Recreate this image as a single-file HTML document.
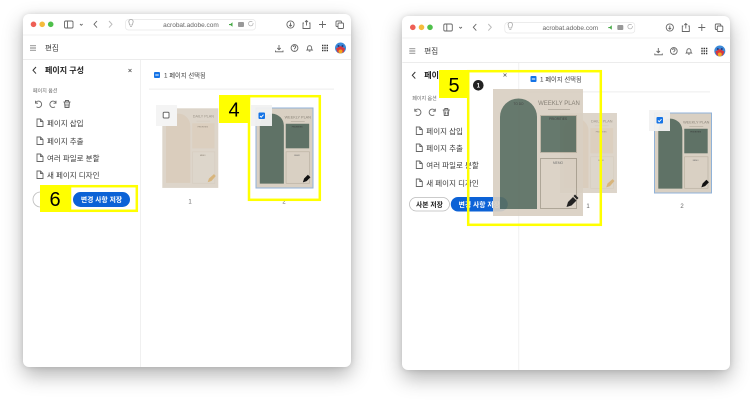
<!DOCTYPE html>
<html lang="ko"><head><meta charset="utf-8"><title>페이지 구성</title>
<style>
html,body{margin:0;padding:0;background:#fff;width:750px;height:402px;overflow:hidden}
.win{position:absolute;background:#fff;border-radius:6px;box-shadow:0 8px 20px rgba(0,0,0,.3),0 0 6px rgba(0,0,0,.12)}
svg{position:absolute;left:0;top:0;filter:blur(.35px)}
text{font-family:"Liberation Sans","Noto Sans CJK KR",sans-serif;fill:#3a3a3a}
.i{fill:none;stroke:#666;stroke-width:.9}
</style></head><body>
<div class="win" style="left:23px;top:13.500px;width:328px;height:353.500px"></div>
<div class="win" style="left:402px;top:16px;width:328px;height:354px"></div>
<svg width="750" height="402" viewBox="0 0 750 402" xmlns="http://www.w3.org/2000/svg">
<defs>
<g id="tb">
<circle cx="33.500" cy="24.300" r="2.800" fill="#ee5f55"/><circle cx="42.200" cy="24.300" r="2.800" fill="#f5bb3c"/><circle cx="50.700" cy="24.300" r="2.800" fill="#4fc04b"/>
<rect x="64.500" y="21" width="8.500" height="7" rx="1.300" class="i"/><path d="M67.500 21v7" class="i"/><path d="M80 24l1.300 1.300 1.300-1.300" class="i"/>
<path d="M97 21l-3 3.300 3 3.300" class="i" stroke-width="1.100"/><path d="M109 21l3 3.300-3 3.300" fill="none" stroke="#bbb"/>
<rect x="125.500" y="19.500" width="130" height="10.500" rx="3" fill="#fff" stroke="#e6e6e6" stroke-width=".7"/>
<path d="M129 22.500a2.200 2.200 0 1 1 4 0l-.7 2.500h-2.600zM130 26.500h2" fill="none" stroke="#aaa" stroke-width=".8"/>
<path d="M229 24h1.500l2-1.700v4.500l-2-1.700h-1.500z" fill="#45a845"/>
<rect x="238" y="22" width="6" height="5" rx="1" fill="#999"/>
<path d="M253 23a2.300 2.300 0 1 1-.6-1" fill="none" stroke="#aaa" stroke-width=".7"/>
<circle cx="290.500" cy="24.500" r="3.600" class="i"/><path d="M290.500 22.500v3.500M289.200 25l1.300 1.300 1.300-1.300" class="i" stroke-width=".6"/>
<path d="M304 23h-1v5.500h7V23h-1M306.500 25.500V20.500M305 22l1.500-1.500L308 22" class="i"/>
<path d="M322.500 21v7M319 24.500h7" class="i"/>
<rect x="336" y="21" width="5.500" height="5.500" rx="1" class="i"/><rect x="338" y="23" width="5.500" height="5.500" rx="1" fill="#fff" stroke="#666" stroke-width=".9"/>
<path d="M30 45.800h6M30 48h6M30 50.200h6" fill="none" stroke="#555" stroke-width=".7"/>
<path d="M279 45v4.500M277.300 48l1.700 1.700 1.700-1.700M275.500 50.500v1.300h7.500v-1.300" class="i"/>
<circle cx="294.500" cy="48" r="3.400" class="i"/><path d="M293.300 47a1.200 1.200 0 1 1 1.700 1.100l-.5.700v.5M294.500 50.300v.3" class="i" stroke-width=".6"/>
<path d="M307 50c.6-.6.6-1 .6-2.300a2 2 0 0 1 4 0c0 1.300 0 1.700.6 2.300zM308.800 51.200h1.600" class="i"/>
<path d="M322 45.500h1.400m.9 0h1.400m.9 0h1.400M322 48h1.400m.9 0h1.400m.9 0h1.400M322 50.500h1.400m.9 0h1.400m.9 0h1.400" fill="none" stroke="#333" stroke-width="1.400"/>
<circle cx="340.500" cy="48" r="5.500" fill="#3b8ad9"/><path d="M336 48.500l4.500-2.500 4.500 2.500-1.500 4h-6z" fill="#d8383f"/><circle cx="340.500" cy="51.500" r="2" fill="#f4a51f"/><circle cx="338.500" cy="46" r="1" fill="#27367c"/><circle cx="342.500" cy="46" r="1" fill="#27367c"/>
</g>
<g id="tools">
<path d="M35.500 103a3.200 3.200 0 1 1 1 3.800M35.500 100.700v2.500h2.500" class="i"/>
<path d="M56 103a3.200 3.200 0 1 0-1 3.800M56 100.700v2.500h-2.500" class="i"/>
<path d="M63.500 102h7M65.500 102v-1.500h3V102M64.500 102l.5 5.500h4l.5-5.500M66 103.500v3M68 103.500v3" class="i" stroke-width=".8"/>
</g>
<path id="doc" d="M0 0h3.500l2.500 2.500V7.500H0zM3.500 0v2.500H6" fill="none" stroke="#666" stroke-width=".9"/>
</defs>

<!-- LEFT WINDOW -->
<path d="M23 35h328" stroke="#ececec" stroke-width=".8"/>
<path d="M23 59.500h328" stroke="#e6e6e6" stroke-width=".8"/>
<path d="M140.500 60v307" stroke="#ededed" stroke-width=".8"/>
<use href="#tb"/>
<text x="191" y="27" font-size="6.500" text-anchor="middle" style="fill:#666">acrobat.adobe.com</text>
<text x="45" y="50.500" font-size="7.500">편집</text>
<path d="M36 67l-3 3.300 3 3.300" fill="none" stroke="#333" stroke-width="1"/>
<text x="45" y="73" font-size="8" font-weight="700" style="fill:#222">페이지 구성</text>
<path d="M128.500 69l3 3M131.500 69l-3 3" stroke="#555" stroke-width=".8"/>
<text x="33" y="92.500" font-size="5" style="fill:#666">페이지 옵션</text>
<use href="#tools"/>
<use href="#doc" x="37" y="119"/><text x="47" y="126" font-size="7.500">페이지 삽입</text>
<use href="#doc" x="37" y="137"/><text x="47" y="144" font-size="7.500">페이지 추출</text>
<use href="#doc" x="37" y="154"/><text x="47" y="161" font-size="7.500">여러 파일로 분할</text>
<use href="#doc" x="37" y="171"/><text x="47" y="178" font-size="7.500">새 페이지 디자인</text>
<rect x="33" y="192" width="30" height="15" rx="7.500" fill="#fff" stroke="#bbb" stroke-width=".8"/>
<rect x="149" y="88.700" width="185" height=".8" fill="#e8e8e8"/>
<rect x="154" y="72" width="6" height="6" rx="1" fill="#1473e6"/><rect x="155.300" y="74.500" width="3.400" height="1" fill="#fff"/>
<text x="164" y="77.500" font-size="6.300">1 페이지 선택됨</text>

<!-- daily thumb L -->
<g transform="translate(162.300 108.300) scale(.622 .627)">
<rect width="90" height="127" fill="#ddd5ca"/>
<path d="M6 119V28a18.500 18.500 0 0 1 39 0v91z" fill="#dacdbd"/>
<text x="66" y="15" font-size="6" text-anchor="middle" style="fill:#9c9488">DAILY PLAN</text>
<rect x="55" y="20" width="22" height=".8" fill="#d2c9bc"/>
<rect x="48" y="24" width="36" height="40" fill="#dccfbf"/>
<text x="65" y="31" font-size="3" text-anchor="middle" style="fill:#887e70">PRIORITIES</text>
<rect x="48.500" y="69.500" width="36" height="50" fill="#ddd6cb" stroke="#d5ccbf"/>
<text x="65" y="76" font-size="3" text-anchor="middle" style="fill:#887e70">MEMO</text>
<path d="M73 118l2-6 8-7 3 3-7 8z" fill="#d8b57c"/>
</g>
<rect x="156" y="105" width="21" height="21" fill="#f4f4f4"/>
<rect x="163.200" y="112.200" width="5.800" height="5.800" rx="1" fill="#fff" stroke="#666" stroke-width="1"/>
<text x="190" y="203.500" font-size="6" text-anchor="middle" style="fill:#666">1</text>

<!-- weekly thumb L -->
<g transform="translate(256 108) scale(.633 .63)">
<rect width="90" height="127" fill="#d9d0c3"/>
<path d="M6 120V28a19 19 0 0 1 38 0v92z" fill="#5f7266"/>
<text x="66" y="17" font-size="6" text-anchor="middle" style="fill:#8a8378">WEEKLY PLAN</text>
<rect x="55" y="21" width="22" height=".8" fill="#a9a194"/>
<rect x="47" y="25" width="37" height="39" fill="#5f7266"/>
<text x="65" y="31" font-size="3" text-anchor="middle" style="fill:#333">PRIORITIES</text>
<rect x="47.500" y="69.500" width="37" height="50" fill="#d9d0c3" stroke="#b8b0a0"/>
<text x="65" y="76" font-size="3" text-anchor="middle" style="fill:#666">MEMO</text>
<path d="M74 118l2-6 6-6 4 4-6 6z" fill="#111"/>
</g>
<rect x="256" y="108" width="57" height="80" fill="none" stroke="#90b2d8" stroke-width="1"/>
<rect x="251" y="105" width="21" height="21" fill="#f1f1f1" fill-opacity=".95"/>
<rect x="258.500" y="112.500" width="6.500" height="6.500" rx="1" fill="#1473e6"/><path d="M260 116l1.200 1.200 2.300-2.500" fill="none" stroke="#fff" stroke-width=".9"/>
<text x="284" y="203.500" font-size="6" text-anchor="middle" style="fill:#666">2</text>

<!-- annotation 4 -->
<rect x="249" y="96.200" width="70.800" height="103.600" fill="none" stroke="#ffff00" stroke-width="2.500"/>
<rect x="219" y="95" width="30" height="28" fill="#ffff00"/>
<text x="234" y="116.500" font-size="20" text-anchor="middle" style="fill:#000">4</text>
<!-- annotation 6 -->
<rect x="70" y="186.200" width="66.800" height="24.600" fill="#fff" stroke="#ffff00" stroke-width="2.500"/>
<rect x="40" y="185" width="30" height="27" fill="#ffff00"/>
<text x="55" y="206" font-size="20" text-anchor="middle" style="fill:#000">6</text>
<rect x="73" y="192" width="57" height="15" rx="7.500" fill="#0c62d6"/>
<text x="101.500" y="202" font-size="6.800" font-weight="700" text-anchor="middle" style="fill:#fff">변경 사항 저장</text>

<!-- RIGHT WINDOW -->
<g transform="translate(379.300 3)">
<path d="M23 35h328" stroke="#ececec" stroke-width=".8"/>
<path d="M23 59.500h328" stroke="#e6e6e6" stroke-width=".8"/>
<path d="M139.500 60v307" stroke="#ededed" stroke-width=".8"/>
<use href="#tb"/>
<text x="191" y="27" font-size="6.500" text-anchor="middle" style="fill:#666">acrobat.adobe.com</text>
<text x="45" y="50.500" font-size="7.500">편집</text>
<path d="M36 69l-3 3.300 3 3.300" fill="none" stroke="#333" stroke-width="1"/>
<text x="45" y="75" font-size="8" font-weight="700" style="fill:#222">페이지 구성</text>
<text x="33" y="97" font-size="5" style="fill:#666">페이지 옵션</text>
<g transform="translate(0 5)"><use href="#tools"/></g>
<use href="#doc" x="37" y="124"/><text x="47" y="131" font-size="7.500">페이지 삽입</text>
<use href="#doc" x="37" y="141"/><text x="47" y="148" font-size="7.500">페이지 추출</text>
<use href="#doc" x="37" y="158"/><text x="47" y="165" font-size="7.500">여러 파일로 분할</text>
<use href="#doc" x="37" y="176"/><text x="47" y="183" font-size="7.500">새 페이지 디자인</text>
<rect x="30.200" y="194.500" width="40" height="13.500" rx="6.750" fill="#fff" stroke="#bbb" stroke-width=".8"/>
<text x="50.200" y="204" font-size="6.800" font-weight="700" text-anchor="middle" style="fill:#222">사본 저장</text>
<rect x="71.500" y="194" width="57" height="14.500" rx="7.250" fill="#0c62d6"/>
<text x="100" y="204" font-size="6.800" font-weight="700" text-anchor="middle" style="fill:#fff">변경 사항 저장</text>
</g>
<rect x="528" y="91.500" width="182" height=".8" fill="#e8e8e8"/>
<rect x="530.500" y="76" width="6" height="6" rx="1" fill="#1473e6"/><rect x="531.800" y="78.500" width="3.400" height="1" fill="#fff"/>
<text x="540" y="81.500" font-size="6.300">1 페이지 선택됨</text>

<g transform="translate(560 113) scale(.633 .63)">
<rect width="90" height="127" fill="#ddd5ca"/>
<path d="M6 119V28a18.500 18.500 0 0 1 39 0v91z" fill="#dacdbd"/>
<text x="66" y="15" font-size="6" text-anchor="middle" style="fill:#9c9488">DAILY PLAN</text>
<rect x="55" y="20" width="22" height=".8" fill="#d2c9bc"/>
<rect x="48" y="24" width="36" height="40" fill="#dccfbf"/>
<text x="65" y="31" font-size="3" text-anchor="middle" style="fill:#887e70">PRIORITIES</text>
<rect x="48.500" y="69.500" width="36" height="50" fill="#ddd6cb" stroke="#d5ccbf"/>
<text x="65" y="76" font-size="3" text-anchor="middle" style="fill:#887e70">MEMO</text>
<path d="M73 118l2-6 8-7 3 3-7 8z" fill="#d8b57c"/>
</g>
<text x="588" y="208" font-size="6" text-anchor="middle" style="fill:#666">1</text>

<g transform="translate(654.500 113) scale(.633 .63)">
<rect width="90" height="127" fill="#d9d0c3"/>
<path d="M6 120V28a19 19 0 0 1 38 0v92z" fill="#5f7266"/>
<text x="66" y="17" font-size="6" text-anchor="middle" style="fill:#8a8378">WEEKLY PLAN</text>
<rect x="55" y="21" width="22" height=".8" fill="#a9a194"/>
<rect x="47" y="25" width="37" height="39" fill="#5f7266"/>
<text x="65" y="31" font-size="3" text-anchor="middle" style="fill:#333">PRIORITIES</text>
<rect x="47.500" y="69.500" width="37" height="50" fill="#d9d0c3" stroke="#b8b0a0"/>
<text x="65" y="76" font-size="3" text-anchor="middle" style="fill:#666">MEMO</text>
<path d="M74 118l2-6 6-6 4 4-6 6z" fill="#111"/>
</g>
<rect x="654.500" y="113" width="57" height="80" fill="none" stroke="#90b2d8" stroke-width="1"/>
<rect x="649" y="110" width="21" height="21" fill="#f1f1f1" fill-opacity=".95"/>
<rect x="656.500" y="117" width="6.500" height="6.500" rx="1" fill="#1473e6"/><path d="M658 120.500l1.200 1.200 2.300-2.500" fill="none" stroke="#fff" stroke-width=".9"/>
<text x="682" y="208" font-size="6" text-anchor="middle" style="fill:#666">2</text>

<!-- drag preview -->
<g opacity=".92">
<g transform="translate(493 89)">
<rect width="90" height="127" fill="#d9d0c3"/>
<path d="M7 120V28a18.500 18.500 0 0 1 37 0v92z" fill="#5a6e61"/>
<text x="25.500" y="16" font-size="3.200" text-anchor="middle" style="fill:#333">TO DO</text>
<text x="66" y="16" font-size="6" text-anchor="middle" style="fill:#7d766b">WEEKLY PLAN</text>
<rect x="55" y="20" width="22" height=".8" fill="#a9a194"/>
<rect x="47.500" y="26.500" width="36" height="37" fill="#5a6e61" stroke="#b8b0a0"/>
<text x="65" y="31" font-size="3.200" text-anchor="middle" style="fill:#333">PRIORITIES</text>
<rect x="47.500" y="69.500" width="36" height="50" fill="#d9d0c3" stroke="#a89f90"/>
<text x="65" y="75" font-size="3.200" text-anchor="middle" style="fill:#666">MEMO</text>
<path d="M73.500 118l1.500-5 5-5 3.500 3.500-5 5zM80.500 107l1.500-1.500 3.500 3.500-1.500 1.500z" fill="#111"/>
</g>
</g>
<path d="M503.500 73.500l3 3M506.500 73.500l-3 3" stroke="#666" stroke-width=".8"/>
<circle cx="478.300" cy="85.300" r="5.300" fill="#222"/>
<text x="478.300" y="87.500" font-size="6" font-weight="700" text-anchor="middle" style="fill:#fff">1</text>

<!-- annotation 5 -->
<rect x="468.200" y="71.200" width="132.600" height="153.600" fill="none" stroke="#ffff00" stroke-width="2.500"/>
<rect x="439" y="70" width="29" height="28" fill="#ffff00"/>
<text x="454" y="92" font-size="20" text-anchor="middle" style="fill:#000">5</text>
</svg>
</body></html>
